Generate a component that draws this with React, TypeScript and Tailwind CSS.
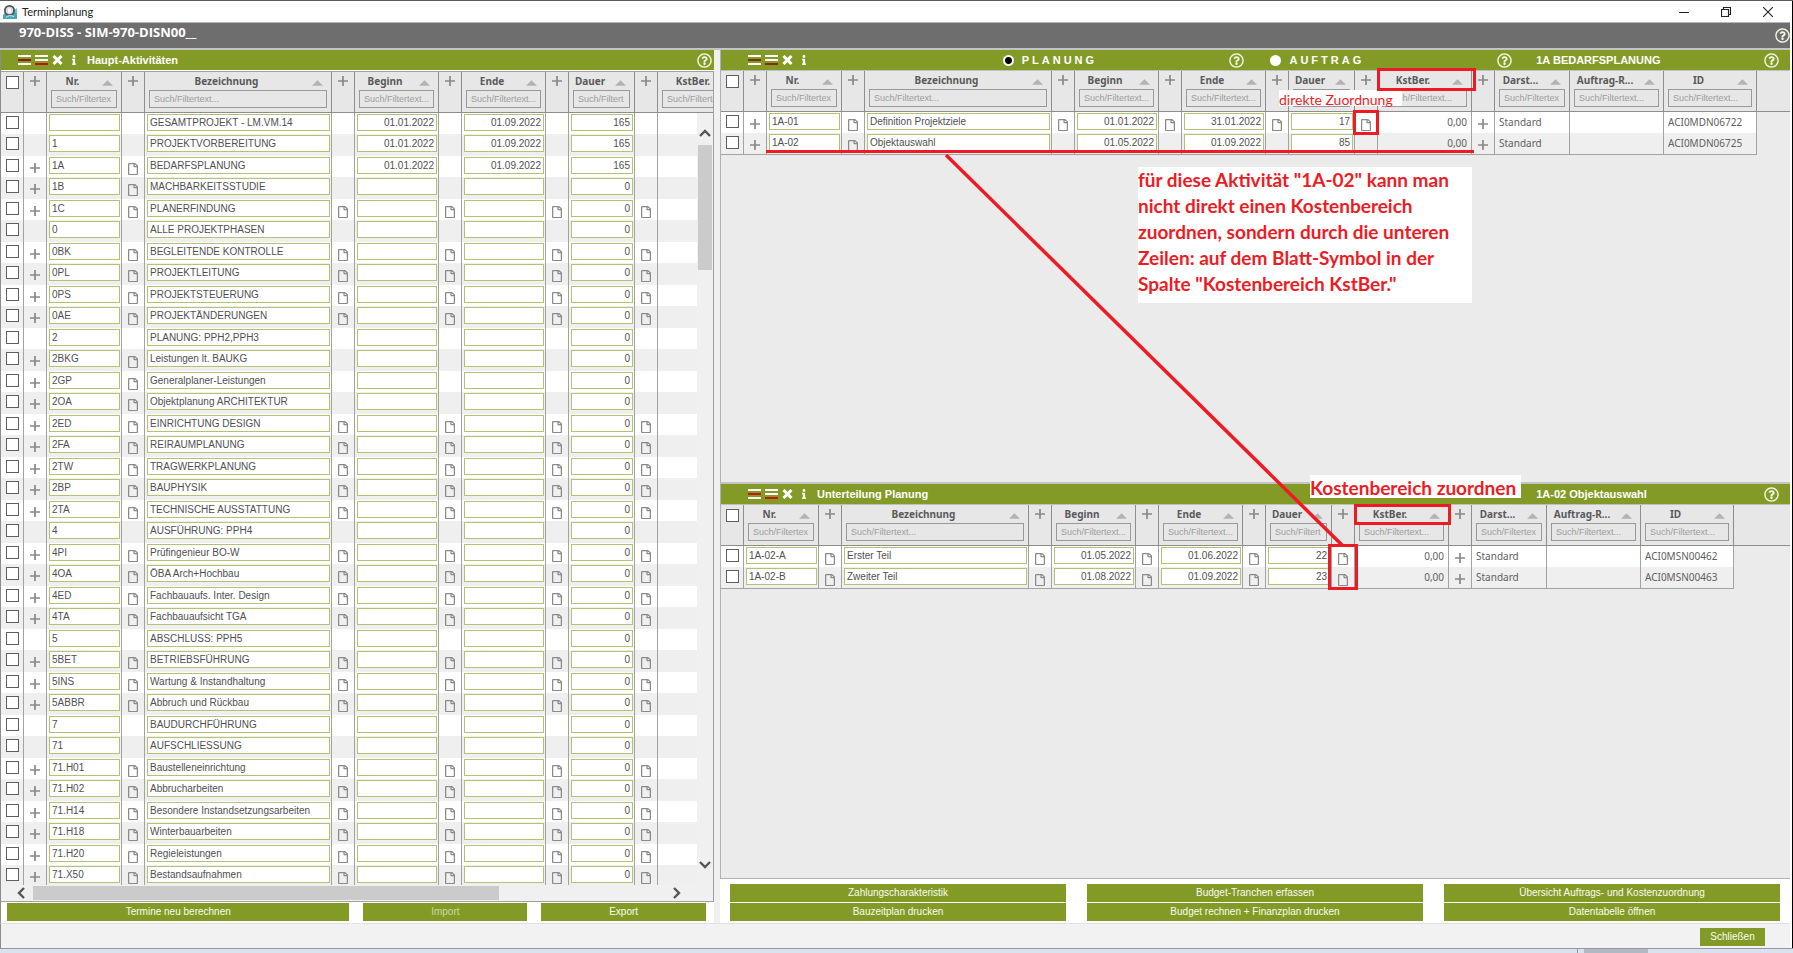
import React from "react";
import { FaInfo, FaRegFile, FaRegQuestionCircle } from "react-icons/fa";

type Align = "left" | "right";
type Kind = "check" | "icon" | "edit" | "text" | "fill";
interface Column {
  kind: Kind;
  width: string;
  label?: string;
  hint?: string;
  align?: Align;
}
/* A cell is "+" (plus), "p" (page symbol) or plain text. */
type Row = string[];

const HINT = "Such/Filtertext...";
const check: Column = { kind: "check", width: "w-[23px]" };
const icon: Column = { kind: "icon", width: "w-[23px]" };
const nr: Column = { kind: "edit", width: "w-[75px]", label: "Nr.", hint: "Such/Filtertex" };
const bez: Column = { kind: "edit", width: "w-[187px]", label: "Bezeichnung" };
const beginn: Column = { kind: "edit", width: "w-[84px]", label: "Beginn", align: "right" };
const ende: Column = { kind: "edit", width: "w-[84px]", label: "Ende", align: "right" };
const dauer: Column = { kind: "edit", width: "w-[66px]", label: "Dauer", hint: "Such/Filtert", align: "right" };
const kst: Column = { kind: "text", width: "w-[94px]", label: "KstBer.", align: "right" };
const darst: Column = { kind: "text", width: "w-[75px]", label: "Darst...", hint: "Such/Filtertex" };
const auftrag: Column = { kind: "text", width: "w-[94px]", label: "Auftrag-R..." };
const id: Column = { kind: "text", width: "w-[93px]", label: "ID" };
const fill: Column = { kind: "fill", width: "w-auto" };

const mainColumns = [check, icon, nr, icon, bez, icon, beginn, icon, ende, icon, dauer, icon, kst];
const planColumns = [check, icon, nr, icon, bez, icon, beginn, icon, ende, icon, dauer, icon, kst, icon, darst, auftrag, id, fill];
const partColumns = [check, nr, icon, bez, icon, beginn, icon, ende, icon, dauer, icon, kst, icon, darst, auftrag, id, fill];

/* level 0: no symbols, 1: plus and first page, 2: every symbol */
const activities: [string, string, 0 | 1 | 2][] = [
  ["", "GESAMTPROJEKT - LM.VM.14", 0],
  ["1", "PROJEKTVORBEREITUNG", 0],
  ["1A", "BEDARFSPLANUNG", 1],
  ["1B", "MACHBARKEITSSTUDIE", 1],
  ["1C", "PLANERFINDUNG", 2],
  ["0", "ALLE PROJEKTPHASEN", 0],
  ["0BK", "BEGLEITENDE KONTROLLE", 2],
  ["0PL", "PROJEKTLEITUNG", 2],
  ["0PS", "PROJEKTSTEUERUNG", 2],
  ["0AE", "PROJEKTÄNDERUNGEN", 2],
  ["2", "PLANUNG: PPH2,PPH3", 0],
  ["2BKG", "Leistungen lt. BAUKG", 1],
  ["2GP", "Generalplaner-Leistungen", 1],
  ["2OA", "Objektplanung ARCHITEKTUR", 1],
  ["2ED", "EINRICHTUNG DESIGN", 2],
  ["2FA", "REIRAUMPLANUNG", 2],
  ["2TW", "TRAGWERKPLANUNG", 2],
  ["2BP", "BAUPHYSIK", 2],
  ["2TA", "TECHNISCHE AUSSTATTUNG", 2],
  ["4", "AUSFÜHRUNG: PPH4", 0],
  ["4PI", "Prüfingenieur BO-W", 2],
  ["4OA", "ÖBA Arch+Hochbau", 2],
  ["4ED", "Fachbauaufs. Inter. Design", 2],
  ["4TA", "Fachbauaufsicht TGA", 2],
  ["5", "ABSCHLUSS: PPH5", 0],
  ["5BET", "BETRIEBSFÜHRUNG", 2],
  ["5INS", "Wartung & Instandhaltung", 2],
  ["5ABBR", "Abbruch und Rückbau", 2],
  ["7", "BAUDURCHFÜHRUNG", 0],
  ["71", "AUFSCHLIESSUNG", 0],
  ["71.H01", "Baustelleneinrichtung", 2],
  ["71.H02", "Abbrucharbeiten", 2],
  ["71.H14", "Besondere Instandsetzungsarbeiten", 2],
  ["71.H18", "Winterbauarbeiten", 2],
  ["71.H20", "Regieleistungen", 2],
  ["71.X50", "Bestandsaufnahmen", 2],
];

const mainRows: Row[] = activities.map(([no, name, level], i) => {
  const page = level === 2 ? "p" : "";
  const dated = i < 3;
  return [
    "", level ? "+" : "", no, level ? "p" : "", name, page,
    dated ? "01.01.2022" : "", page, dated ? "01.09.2022" : "", page, dated ? "165" : "0", page, "",
  ];
});

const planRows: Row[] = [
  ["", "+", "1A-01", "p", "Definition Projektziele", "p", "01.01.2022", "p", "31.01.2022", "p", "17", "p", "0,00", "+", "Standard", "", "ACI0MDN06722", ""],
  ["", "+", "1A-02", "p", "Objektauswahl", "", "01.05.2022", "", "01.09.2022", "", "85", "", "0,00", "+", "Standard", "", "ACI0MDN06725", ""],
];

const partRows: Row[] = [
  ["", "1A-02-A", "p", "Erster Teil", "p", "01.05.2022", "p", "01.06.2022", "p", "22", "p", "0,00", "+", "Standard", "", "ACI0MSN00462", ""],
  ["", "1A-02-B", "p", "Zweiter Teil", "p", "01.08.2022", "p", "01.09.2022", "p", "23", "p", "0,00", "+", "Standard", "", "ACI0MSN00463", ""],
];

function Plus() {
  return (
    <svg viewBox="0 0 10 10" className="size-[10px] text-[#888888]" aria-hidden="true">
      <path d="M5 0v10M0 5h10" stroke="currentColor" strokeWidth="1.7" />
    </svg>
  );
}

function Help({ label }: { label: string }) {
  return (
    <button type="button" aria-label={label} className="shrink-0 text-[#f4f8e6]">
      <FaRegQuestionCircle className="size-[15px]" />
    </button>
  );
}

function Check({ label }: { label: string }) {
  return (
    <input
      type="checkbox"
      aria-label={label}
      className="block size-[13px] appearance-none border border-[#5f5f5f] bg-white checked:bg-[#5f5f5f]"
    />
  );
}

function HeadCell({ col, table }: { col: Column; table: string }) {
  const base = "h-[41px] border-b border-[#8e8e8e] bg-[#e7e7e7] p-0 align-top";
  if (col.kind === "fill") return <th className={base} aria-hidden="true" />;
  if (col.kind === "check")
    return (
      <th className={`${base} border-r`}>
        <div className="flex justify-center pt-1">
          <Check label={`${table}: alle auswählen`} />
        </div>
      </th>
    );
  if (col.kind === "icon")
    return (
      <th className={`${base} border-r`}>
        <div className="flex justify-center pt-1">
          <Plus />
        </div>
      </th>
    );
  return (
    <th className={`${base} border-r`}>
      <div className="flex h-[18px] items-center">
        <span className="min-w-0 flex-1 whitespace-nowrap text-center font-['Noto_Sans',sans-serif] text-[10px] leading-4 font-bold text-[#5a5a5a]">
          {col.label}
        </span>
        <svg viewBox="0 0 12 6" className="mt-1 mr-2 ml-1 h-[6px] w-[11px] shrink-0" aria-hidden="true">
          <path d="M0 6 6 0l6 6z" fill="#b3b3b3" />
        </svg>
      </div>
      <input
        type="text"
        placeholder={col.hint ?? HINT}
        aria-label={`${table}: ${col.label} filtern`}
        className="mx-auto block h-[18px] w-[calc(100%-8px)] border border-[#999999] bg-[#e7e7e7] px-1 text-[9px] leading-4 font-normal outline-none placeholder:text-[#9c9c9c] placeholder:opacity-100"
      />
    </th>
  );
}

function BodyCell({ col, value, name, lined }: { col: Column; value: string; name: string; lined: boolean }) {
  if (col.kind === "fill") return <td className="bg-[#ebebeb]" />;
  const base = lined
    ? "border-r border-[#a3a3a3] p-0 align-top group-last:border-b"
    : "border-r border-[#a3a3a3] p-0 align-top";
  if (col.kind === "check")
    return (
      <td className={base}>
        <div className="flex justify-center pt-[3px]">
          <Check label={`${name} auswählen`} />
        </div>
      </td>
    );
  if (col.kind === "icon")
    return (
      <td className={base}>
        {value && (
          <button type="button" aria-label={`${name}: ${value === "+" ? "hinzufügen" : "Blatt"}`} className="flex h-[19px] w-full items-end justify-center">
            {value === "+" ? (
              <span className="pb-0.5"><Plus /></span>
            ) : (
              <FaRegFile className="h-[12px] w-[10px] text-[#8a8a8a]" preserveAspectRatio="none" />
            )}
          </button>
        )}
      </td>
    );
  if (col.kind === "edit")
    return (
      <td className={`${base} pt-px pr-px pl-0.5`}>
        <input
          type="text"
          defaultValue={value}
          aria-label={`${name}: ${col.label}`}
          className={`block h-[17px] w-full border border-[#b4c373] bg-white px-0.5 text-[10px] leading-[15px] text-[#505050] outline-none ${
            col.align === "right" ? "text-right" : "text-left"
          }`}
        />
      </td>
    );
  return (
    <td
      className={`${base} px-1 pt-px font-['Noto_Sans',sans-serif] text-[10px] leading-[18px] whitespace-nowrap text-[#606060] ${
        col.align === "right" ? "text-right" : "text-left"
      }`}
    >
      {value}
    </td>
  );
}

function DataTable({ name, columns, rows, lined = true }: { name: string; columns: Column[]; rows: Row[]; lined?: boolean }) {
  return (
    <table className="w-full table-fixed border-separate border-spacing-0" aria-label={name}>
      <colgroup>
        {columns.map((c, i) => (
          <col key={i} className={c.width} />
        ))}
      </colgroup>
      <thead>
        <tr>
          {columns.map((c, i) => (
            <HeadCell key={i} col={c} table={name} />
          ))}
        </tr>
      </thead>
      <tbody>
        {rows.map((row, r) => (
          <tr key={r} className="group h-[21px] bg-white even:h-[22px] even:bg-[#efefef]">
            {columns.map((c, i) => (
              <BodyCell key={i} col={c} value={row[i]} name={`${name} Zeile ${r + 1}`} lined={lined} />
            ))}
          </tr>
        ))}
      </tbody>
    </table>
  );
}

function Tools({ first, second }: { first: string; second: string }) {
  return (
    <div className="flex items-center">
      <button type="button" aria-label="Zeile einfügen" className="mr-1">
        <svg viewBox="0 0 13 10" className="h-[10px] w-[13px]" aria-hidden="true">
          <path d="M0 1h13M0 9h13" stroke="#fff" strokeWidth="2" />
          <path d="M0 5h13" stroke={first} strokeWidth="2" />
        </svg>
      </button>
      <button type="button" aria-label="Zeile anhängen" className="mr-1">
        <svg viewBox="0 0 13 10" className="h-[10px] w-[13px]" aria-hidden="true">
          <path d="M0 1h13M0 5h13" stroke="#fff" strokeWidth="2" />
          <path d="M0 9h13" stroke={second} strokeWidth="2" />
        </svg>
      </button>
      <button type="button" aria-label="Löschen" className="mr-1.5">
        <svg viewBox="0 0 11 10" className="h-[10px] w-[11px]" aria-hidden="true">
          <path d="M1.5 1l8 8M9.500 1l-8 8" stroke="#fff" strokeWidth="3" />
        </svg>
      </button>
      <button type="button" aria-label="Info" className="mr-2">
        <FaInfo className="h-[10px] w-[10px] text-white" />
      </button>
    </div>
  );
}

function Bar({ children }: { children: React.ReactNode }) {
  return (
    <div className="flex h-5 shrink-0 items-center bg-[#839b26] text-[11px] leading-4 font-bold text-white">{children}</div>
  );
}

function GreenButton({ children, muted = false }: { children: React.ReactNode; muted?: boolean }) {
  return (
    <button
      type="button"
      className={`block h-[18px] w-full bg-[#839b26] px-2 text-[10px] leading-[18px] whitespace-nowrap ${muted ? "text-[#cdd6a6]" : "text-[#fafcf0]"}`}
    >
      {children}
    </button>
  );
}

function Mode({ label, checked = false }: { label: string; checked?: boolean }) {
  return (
    <div className="flex items-center justify-between pr-6">
      <label className="flex items-center gap-2 pl-0.5 tracking-[3px]">
        <input
          type="radio"
          name="modus"
          defaultChecked={checked}
          className="size-[11px] appearance-none rounded-full bg-white checked:bg-[radial-gradient(circle,#000_3px,#fff_4px)]"
        />
        {label}
      </label>
      <Help label={`Hilfe ${label}`} />
    </div>
  );
}

function Chevron({ d }: { d: string }) {
  return (
    <svg viewBox="0 0 12 12" className="size-3" aria-hidden="true">
      <path d={d} fill="none" stroke="#555" strokeWidth="2.4" />
    </svg>
  );
}

function Annotations() {
  const red = "absolute border-3 border-[#ed1c24]";
  return (
    <div className="pointer-events-none absolute inset-0 font-['Lato',sans-serif] text-[#ed1c24]">
      <svg className="absolute inset-0 h-full w-full" aria-hidden="true">
        <path d="M946 154 1342 544" stroke="#ed1c24" strokeWidth="3.500" />
      </svg>
      <div className="absolute top-[149px] left-[766px] h-[3px] w-[708px] bg-[#ed1c24]" />
      <p className="absolute top-[89px] left-[1279px] h-4 w-[123px] bg-white text-[14px] leading-[20px] whitespace-nowrap">direkte Zuordnung</p>
      <div className={`${red} top-[67px] left-[1377px] h-[23px] w-[99px]`} />
      <div className={`${red} top-[109px] left-[1353px] h-[25px] w-[26px]`} />
      <div className={`${red} top-[503px] left-[1354px] h-[21px] w-[97px]`} />
      <div className={`${red} top-[543px] left-[1328px] h-[46px] w-[30px]`} />
      <p className="absolute top-[166px] left-[1138px] h-[136px] w-[334px] bg-white text-[19px] leading-[26px] font-bold whitespace-nowrap">
        für diese Aktivität "1A-02" kann man
        <br />
        nicht direkt einen Kostenbereich
        <br />
        zuordnen, sondern durch die unteren
        <br />
        Zeilen: auf dem Blatt-Symbol in der
        <br />
        Spalte "Kostenbereich KstBer."
      </p>
      <p className="absolute top-[474px] left-[1310px] h-[23px] w-[211px] bg-white text-[19px] leading-[26px] font-bold whitespace-nowrap">
        Kostenbereich zuordnen
      </p>
    </div>
  );
}

export default function App() {
  return (
    <div className="relative flex h-screen w-full flex-col overflow-hidden border-t border-[#5a5a5a] bg-white font-['Liberation_Sans',Arial,sans-serif]">
      <div className="flex min-h-0 flex-1 flex-col border-r border-black pr-0.5">
        <header className="flex h-[21px] shrink-0 items-center pl-[3px]">
          <svg viewBox="0 0 14 14" className="size-[14px]" aria-hidden="true">
            <path d="M0 10 3 7h11v7H0z" fill="#3fa9b5" />
            <path d="M7 8h7V3z" fill="#6cc4cb" />
            <circle cx="6.500" cy="5.500" r="4.600" fill="#d8dcdc" stroke="#4c5558" strokeWidth="1.800" />
            <path d="M5 3.500h3v4H5z" fill="#fff" />
            <path d="M3 12.500c1-2 5-2.500 8-1" stroke="#e9f6f7" fill="none" />
          </svg>
          <h1 className="ml-[5px] font-['Lato',sans-serif] text-[11px] leading-4 text-[#1c1c1c]">Terminplanung</h1>
          <div className="ml-auto flex items-center gap-8 pr-[17px] text-[#222]">
            <button type="button" aria-label="Minimieren">
              <svg viewBox="0 0 10 10" className="size-[10px]"><path d="M0 5.500h10" stroke="currentColor" /></svg>
            </button>
            <button type="button" aria-label="Wiederherstellen">
              <svg viewBox="0 0 10 10" className="size-[10px]">
                <path d="M.5 2.500h7v7h-7zM2.500 2.500v-2h7v7h-2" fill="none" stroke="currentColor" strokeWidth="1.200" />
              </svg>
            </button>
            <button type="button" aria-label="Fenster schließen">
              <svg viewBox="0 0 10 10" className="size-[10px]"><path d="M0 0l10 10M10 0L0 10" stroke="currentColor" strokeWidth="1.100" /></svg>
            </button>
          </div>
        </header>

        <div className="flex h-[28px] shrink-0 justify-between border-t border-b-2 border-t-[#b5b5b5] border-b-[#c4c4c4] bg-[#6e6e6e] pl-[19px]">
          <h2 className="font-['Open_Sans',sans-serif] text-[13px] leading-[19px] font-bold text-white">970-DISS - SIM-970-DISN00__</h2>
          <Help label="Hilfe" />
        </div>

        <main className="flex min-h-0 flex-1 border-l border-[#8c8c8c]">
          <section className="flex min-w-0 flex-[713] flex-col">
            <Bar>
              <div className="pl-[17px]"><Tools first="#8e1f0c" second="#c01408" /></div>
              <h3>Haupt-Aktivitäten</h3>
              <div className="ml-auto flex pr-0.5"><Help label="Hilfe Haupt-Aktivitäten" /></div>
            </Bar>
            <div className="relative mt-px flex min-h-0 flex-1 flex-col border-t border-r border-b border-[#a0a0a0]">
              <div className="min-h-0 flex-1 overflow-hidden">
                <DataTable name="Haupt-Aktivitäten" columns={mainColumns} rows={mainRows} lined={false} />
              </div>
              <div className="flex h-4 shrink-0 items-center bg-[#f0f0f0] pr-[30px] pl-[14px]">
                <Chevron d="M9 1 4 6l5 5" />
                <div className="ml-1.5 flex flex-1">
                  <div className="h-[14px] w-[73%] bg-[#cbcbcb]" />
                </div>
                <Chevron d="M3 1l5 5-5 5" />
              </div>
              <div className="absolute top-[41px] right-0 bottom-4 flex w-4 flex-col items-center bg-[#f0f0f0] pt-[14px] pb-[14px]">
                <Chevron d="M1 9l5-5 5 5" />
                <div className="mt-1.5 w-full flex-1">
                  <div className="ml-px h-[17.5%] w-[14px] bg-[#cbcbcb]" />
                </div>
                <Chevron d="M1 3l5 5 5-5" />
              </div>
            </div>
            <div className="grid shrink-0 grid-cols-[343fr_164fr_165fr] gap-x-[14px] pt-px pr-2 pb-0.5 pl-1.5">
              <GreenButton>Termine neu berechnen</GreenButton>
              <GreenButton muted>Import</GreenButton>
              <GreenButton>Export</GreenButton>
            </div>
          </section>

          <div className="w-1.5 shrink-0 bg-[#f0f0f0]" />

          <section className="flex min-w-0 flex-[1070] flex-col">
            <div className="flex min-h-0 flex-[434] flex-col overflow-hidden border-l border-[#b0b0b0] bg-[#ebebeb]">
              <Bar>
                <div className="grid w-full grid-cols-[280fr_268fr_268fr_254fr] items-center">
                  <div className="pl-[27px]"><Tools first="#7d3410" second="#8e2a10" /></div>
                  <Mode label="PLANUNG" checked />
                  <Mode label="AUFTRAG" />
                  <div className="flex items-center justify-between pr-[11px]">
                    <h3>1A BEDARFSPLANUNG</h3>
                    <Help label="Hilfe Bedarfsplanung" />
                  </div>
                </div>
              </Bar>
              <div className="border-t border-[#c0c0c0]">
                <DataTable name="Planung" columns={planColumns} rows={planRows} />
              </div>
            </div>
            <div className="flex min-h-0 flex-[395] flex-col overflow-hidden border-t-2 border-b border-l border-[#b0b0b0] border-t-[#c4c4c4] bg-[#ebebeb]">
              <Bar>
                <div className="grid w-full grid-cols-[816fr_254fr] items-center">
                  <div className="flex items-center pl-[27px]">
                    <Tools first="#c81808" second="#c81808" />
                    <h3>Unterteilung Planung</h3>
                  </div>
                  <div className="flex items-center justify-between pr-[11px]">
                    <h3>1A-02 Objektauswahl</h3>
                    <Help label="Hilfe Unterteilung" />
                  </div>
                </div>
              </Bar>
              <div className="border-t border-[#c0c0c0]">
                <DataTable name="Unterteilung Planung" columns={partColumns} rows={partRows} />
              </div>
            </div>
            <div className="grid shrink-0 grid-cols-3 gap-x-[21px] gap-y-px px-[10px] pt-[5px] pb-0.5">
              <GreenButton>Zahlungscharakteristik</GreenButton>
              <GreenButton>Budget-Tranchen erfassen</GreenButton>
              <GreenButton>Übersicht Auftrags- und Kostenzuordnung</GreenButton>
              <GreenButton>Bauzeitplan drucken</GreenButton>
              <GreenButton>Budget rechnen + Finanzplan drucken</GreenButton>
              <GreenButton>Datentabelle öffnen</GreenButton>
            </div>
          </section>
        </main>

        <footer className="flex h-[25px] shrink-0 items-start justify-end border-t border-l border-t-[#e0e0e0] border-l-[#8c8c8c] bg-[#f2f2f2] pt-1 pr-[25px]">
          <div className="w-[65px]"><GreenButton>Schließen</GreenButton></div>
        </footer>
      </div>
      <div className="flex h-[5px] shrink-0 border-t border-[#8b99a8] bg-[#dbe2ee]">
        <div className="w-[88%] border-r border-[#8b99a8]" />
        <div className="ml-1.5 h-full w-16 bg-[#b4b8c0]" />
      </div>
      <Annotations />
    </div>
  );
}
